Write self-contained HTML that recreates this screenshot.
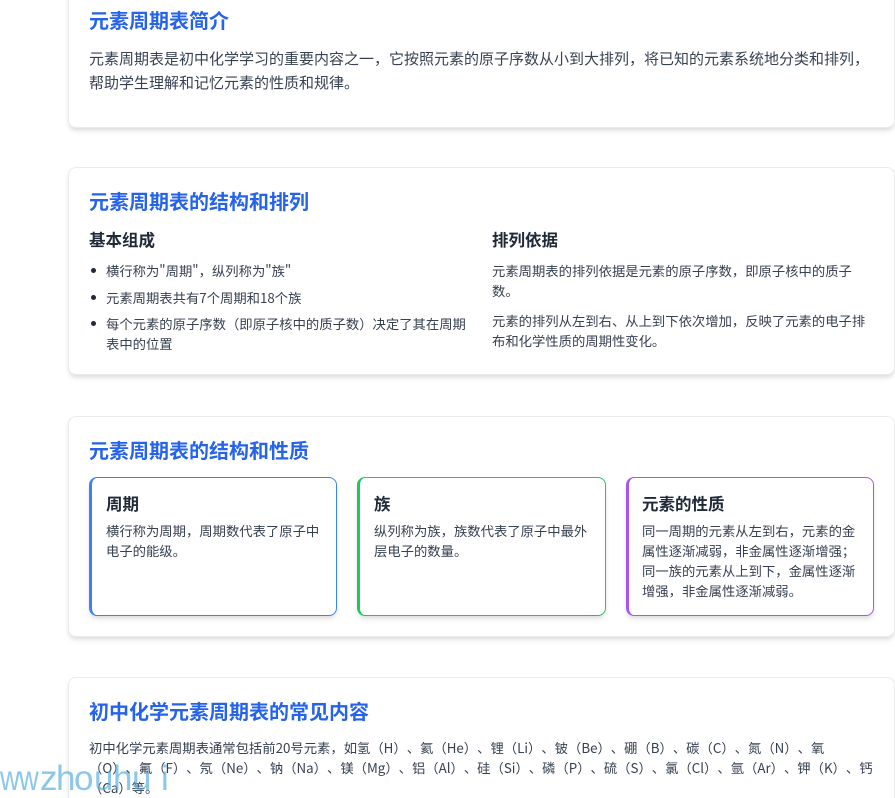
<!DOCTYPE html>
<html lang="zh">
<head>
<meta charset="utf-8">
<title>元素周期表</title>
<style>
html,body{margin:0;padding:0;background:#fff;width:895px;height:798px;overflow:hidden}
body{position:relative;font-family:"Noto Sans CJK SC","Liberation Sans",sans-serif;color:#374151;text-spacing-trim:space-all}
.card{position:absolute;left:68px;width:827px;background:#fff;border:1px solid #e9ebee;border-radius:8px;box-shadow:0 4px 6px -1px rgba(0,0,0,.1),0 2px 4px -1px rgba(0,0,0,.06);box-sizing:border-box}
.t{position:absolute;white-space:nowrap}
h2{position:absolute;left:89px;margin:0;font-size:20px;line-height:30px;font-weight:700;color:#2563eb;white-space:nowrap}
h3{position:absolute;margin:0;font-size:16.5px;line-height:24px;font-weight:700;color:#1f2937;white-space:nowrap}
.p15{font-size:15px;line-height:23.7px}
.p13{font-size:13.33px;line-height:20px}
.dot{position:absolute;left:91px;width:5px;height:5px;border-radius:50%;background:#1f2937}
.box{position:absolute;top:477px;height:139px;background:#fff;border-radius:8px;box-sizing:border-box;border:1px solid;border-left-width:3px;box-shadow:0 4px 6px -1px rgba(0,0,0,.1),0 2px 4px -1px rgba(0,0,0,.06)}
.wm{position:absolute;left:0;top:759px;width:180px;height:39px;overflow:hidden;font-family:"Liberation Sans",sans-serif;font-size:35px;line-height:40px;color:rgba(86,172,224,.68);white-space:nowrap}
.wm span{position:absolute;top:0}
.wm .n{transform:scaleX(.78);transform-origin:0 50%}
</style>
</head>
<body>
<div class="card" style="top:-40px;height:168px"></div>
<h2 style="top:5px">元素周期表简介</h2>
<div class="t p15" style="left:89px;top:47px">元素周期表是初中化学学习的重要内容之一，它按照元素的原子序数从小到大排列，将已知的元素系统地分类和排列，<br>帮助学生理解和记忆元素的性质和规律。</div>

<div class="card" style="top:167px;height:208px"></div>
<h2 style="top:186px">元素周期表的结构和排列</h2>
<h3 style="left:89px;top:227px">基本组成</h3>
<span class="dot" style="top:268px"></span>
<div class="t p13" style="left:106px;top:261px">横行称为"周期"，纵列称为"族"</div>
<span class="dot" style="top:295px"></span>
<div class="t p13" style="left:106px;top:288px">元素周期表共有7个周期和18个族</div>
<span class="dot" style="top:321px"></span>
<div class="t p13" style="left:106px;top:314px">每个元素的原子序数（即原子核中的质子数）决定了其在周期<br>表中的位置</div>
<h3 style="left:492px;top:227px">排列依据</h3>
<div class="t p13" style="left:492px;top:261px">元素周期表的排列依据是元素的原子序数，即原子核中的质子<br>数。</div>
<div class="t p13" style="left:492px;top:311px">元素的排列从左到右、从上到下依次增加，反映了元素的电子排<br>布和化学性质的周期性变化。</div>

<div class="card" style="top:416px;height:221px"></div>
<h2 style="top:435px">元素周期表的结构和性质</h2>
<div class="box" style="left:89px;width:248px;border-color:#3b82f6"></div>
<h3 style="left:106px;top:491px">周期</h3>
<div class="t p13" style="left:106px;top:521px">横行称为周期，周期数代表了原子中<br>电子的能级。</div>
<div class="box" style="left:357px;width:249px;border-color:#22c55e"></div>
<h3 style="left:374px;top:491px">族</h3>
<div class="t p13" style="left:374px;top:521px">纵列称为族，族数代表了原子中最外<br>层电子的数量。</div>
<div class="box" style="left:626px;width:248px;border-color:#a855f7"></div>
<h3 style="left:642px;top:491px">元素的性质</h3>
<div class="t p13" style="left:642px;top:521px">同一周期的元素从左到右，元素的金<br>属性逐渐减弱，非金属性逐渐增强；<br>同一族的元素从上到下，金属性逐渐<br>增强，非金属性逐渐减弱。</div>

<div class="card" style="top:677px;height:160px"></div>
<h2 style="top:696px">初中化学元素周期表的常见内容</h2>
<div class="t p13" style="left:89px;top:738px">初中化学元素周期表通常包括前20号元素，如氢（H）、氦（He）、锂（Li）、铍（Be）、硼（B）、碳（C）、氮（N）、氧<br>（O）、氟（F）、氖（Ne）、钠（Na）、镁（Mg）、铝（Al）、硅（Si）、磷（P）、硫（S）、氯（Cl）、氩（Ar）、钾（K）、钙<br>（Ca）等。</div>

<div class="wm"><span class="n" style="left:0">w</span><span class="n" style="left:19px">w</span><span style="left:40px">z</span><span style="left:56px">h</span><span style="left:74px">o</span><span style="left:94px">u</span><span style="left:113px">h</span><span style="left:132px">u</span><span style="left:161px">i</span></div>
</body>
</html>
